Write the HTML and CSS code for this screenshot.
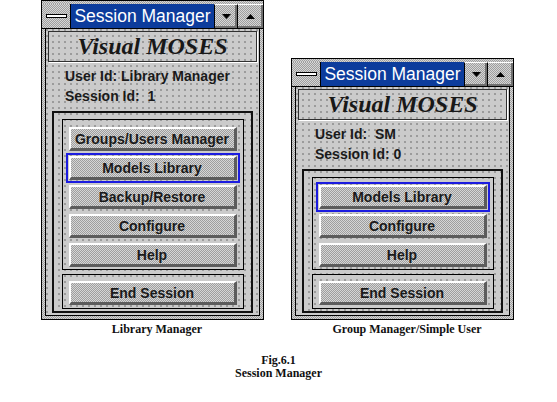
FILE: index.html
```html
<!DOCTYPE html>
<html>

<head>
	<title>Session Manager</title>

	<link rel="stylesheet" href="styles.css">
</head>

<body>

	<div class="figures">

		<div class="figure">
			<div class="window">
				<div class="titlebar">
					<span class="sysmenu"><span class="sysbar"></span></span>
					<span class="title">Session Manager</span>
					<span class="tbtn tbtn-min"><svg width="9" height="5" viewBox="0 0 9 5"><path d="M0 0H9L4.5 5Z" fill="#000"/></svg></span>
					<span class="tbtn tbtn-max"><svg width="9" height="5" viewBox="0 0 9 5"><path d="M0 5H9L4.5 0Z" fill="#000"/></svg></span>
				</div>
				<div class="client">
					<div class="brand">Visual MOSES</div>
					<div class="info">
						<div>User Id: Library Manager</div>
						<div>Session Id:&nbsp; 1</div>
					</div>
					<div class="group">
						<div class="box">
							<button class="btn" type="button">Groups/Users Manager</button>
							<button class="btn btn-default" type="button">Models Library</button>
							<button class="btn" type="button">Backup/Restore</button>
							<button class="btn" type="button">Configure</button>
							<button class="btn" type="button">Help</button>
						</div>
						<div class="box box-end">
							<button class="btn" type="button">End Session</button>
						</div>
					</div>
				</div>
			</div>
			<div class="caption">Library Manager</div>
		</div>

		<div class="figure">
			<div class="window">
				<div class="titlebar">
					<span class="sysmenu"><span class="sysbar"></span></span>
					<span class="title">Session Manager</span>
					<span class="tbtn tbtn-min"><svg width="9" height="5" viewBox="0 0 9 5"><path d="M0 0H9L4.5 5Z" fill="#000"/></svg></span>
					<span class="tbtn tbtn-max"><svg width="9" height="5" viewBox="0 0 9 5"><path d="M0 5H9L4.5 0Z" fill="#000"/></svg></span>
				</div>
				<div class="client">
					<div class="brand">Visual MOSES</div>
					<div class="info">
						<div>User Id:&nbsp; SM</div>
						<div>Session Id: 0</div>
					</div>
					<div class="group">
						<div class="box">
							<button class="btn btn-default" type="button">Models Library</button>
							<button class="btn" type="button">Configure</button>
							<button class="btn" type="button">Help</button>
						</div>
						<div class="box box-end">
							<button class="btn" type="button">End Session</button>
						</div>
					</div>
				</div>
			</div>
			<div class="caption">Group Manager/Simple User</div>
		</div>

	</div>

	<div class="fig-title">
		Fig.6.1<br>
		Session Manager
	</div>

</body>

</html>
```

FILE: styles.css
```css
body {
	margin: 0px;
	background: #fff;
	font-family: "Liberation Sans", Arial, sans-serif;
}

.figures {
	display: flex;
	align-items: flex-end;
	gap: 27px;
	padding-left: 41px;
}

.figure {
	width: 223px;
}

/* dithered greys */
.window,
.sysmenu,
.tbtn,
.btn {
	background: #c0c0c0 repeating-conic-gradient(#9e9e9e 0 25%, #d6d6d6 0 50%) 0 0 / 2px 2px;
}

.window {
	box-sizing: border-box;
	width: 223px;
	border: 1px solid #000;
	padding-top: 3px;
}

.titlebar {
	display: flex;
	height: 24px;
	border-bottom: 1px solid #000;
}

.sysmenu {
	width: 28px;
	border-right: 1px solid #000;
	display: flex;
	align-items: center;
	justify-content: center;
}

.sysbar {
	width: 19px;
	height: 2px;
	background: #fff;
	border: 1px solid #000;
}

.title {
	flex: 1;
	background: #0c3c9c;
	color: #fff;
	font-size: 17.5px;
	line-height: 24px;
	text-align: center;
	white-space: nowrap;
	overflow: hidden;
}

.tbtn {
	box-sizing: border-box;
	width: 23px;
	border-left: 1px solid #000;
	border-top: 1px solid #fff;
	box-shadow: inset -2px -2px 0 #707070;
	display: flex;
	align-items: center;
	justify-content: center;
}

.tbtn-max {
	width: 26px;
}

.client {
	margin: 0 3px 3px;
	border: 1px solid #000;
	border-top: none;
	padding: 2px 0 2px;
	background: #cbcbcb radial-gradient(circle at 1px 1px, #9a9a9a 0.7px, transparent 1px) 0 0 / 6px 6px;
}

.brand {
	margin: 0 2px;
	height: 29px;
	border: 1px solid #303030;
	box-shadow: 1px 1px 0 #fff;
	text-align: center;
	font-family: "Liberation Serif", "Times New Roman", serif;
	font-weight: bold;
	font-style: italic;
	font-size: 24px;
	line-height: 29px;
	color: #181818;
}

.info {
	height: 45px;
	padding: 4px 0 0 19px;
	font-size: 14px;
	font-weight: bold;
	line-height: 20px;
	color: #1a1a1a;
}

.group {
	margin: 0 6px;
	border: 2px solid #111;
	padding: 6px 0 2px;
	display: flex;
	flex-direction: column;
	align-items: center;
	gap: 4px;
}

.box {
	box-sizing: border-box;
	width: 182px;
	border: 1px solid #000;
	padding: 7px 0 2px;
	display: flex;
	flex-direction: column;
	align-items: center;
	gap: 5px;
}

.box-end {
	padding: 6px 0 3px;
}

.btn {
	box-sizing: border-box;
	width: 168px;
	height: 24px;
	padding: 0;
	border: 2px solid;
	border-color: #fff #5c5c5c #5c5c5c #fff;
	border-width: 2px 3px 3px 2px;
	font-family: "Liberation Sans", Arial, sans-serif;
	font-size: 14px;
	font-weight: bold;
	color: #1a1a1a;
}

.btn-default {
	outline: 2px solid #1c1ce0;
	outline-offset: 1px;
}

.caption {
	text-align: center;
	padding-left: 9px;
	margin-top: 2px;
	font-family: "Liberation Serif", "Times New Roman", serif;
	font-weight: bold;
	font-size: 12px;
	line-height: 14px;
	color: #111;
}

.fig-title {
	width: 557px;
	margin-top: 18px;
	text-align: center;
	font-family: "Liberation Serif", "Times New Roman", serif;
	font-weight: bold;
	font-size: 12px;
	line-height: 13px;
	color: #111;
}
```
